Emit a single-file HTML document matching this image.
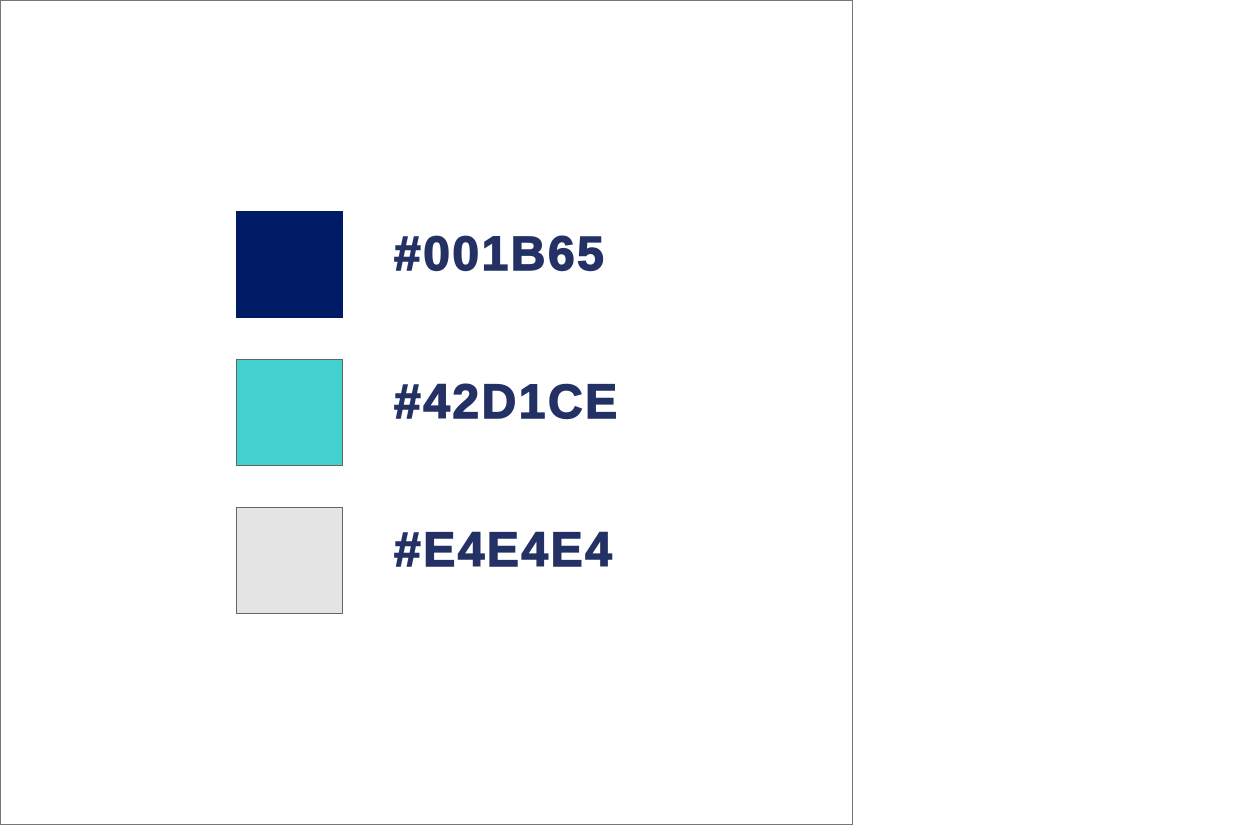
<!DOCTYPE html>
<html><head><style>
body{margin:0;width:1247px;height:825px;background:#fff;position:relative;overflow:hidden}
.frame{position:absolute;left:0;top:0;width:851px;height:823px;border:1px solid #777}
.sq{position:absolute;left:236px;width:107px;height:107px;box-sizing:border-box}
.t{position:absolute;left:394px;font:bold 48px "Liberation Sans",sans-serif;color:#233164;letter-spacing:2.5px;line-height:50px;-webkit-text-stroke:1.4px #233164}
</style></head><body>
<div class="frame"></div>
<div class="sq" style="top:211px;background:#001B65"></div>
<div class="sq" style="top:359px;background:#42D1CE;border:1px solid #666"></div>
<div class="sq" style="top:507px;background:#E4E4E4;border:1px solid #666"></div>
<div class="t" style="top:230px">#001B65</div>
<div class="t" style="top:378px">#42D1CE</div>
<div class="t" style="top:526px">#E4E4E4</div>
</body></html>
